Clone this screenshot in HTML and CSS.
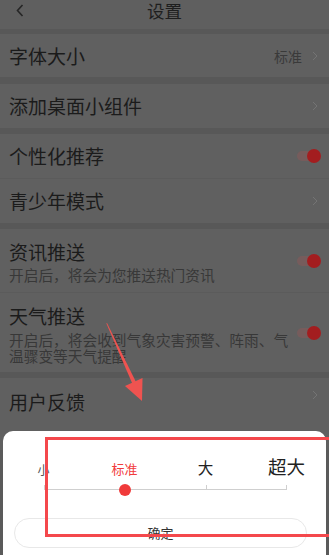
FILE: index.html
```html
<!DOCTYPE html>
<html lang="zh">
<head>
<meta charset="utf-8">
<title>设置</title>
<link rel="stylesheet" href="styles.css">
</head>
<body>
<div class="screen">
  <header class="topbar">
    <svg class="back" width="8" height="13" viewBox="0 0 8 13"><path d="M6.5 1 L1.5 6.5 L6.5 12" fill="none" stroke="#262626" stroke-width="1.6"/></svg>
    <h1 class="title">设置</h1>
    <span></span>
  </header>
  <div class="gap g1"></div>
  <div class="row r1">
    <span class="label">字体大小</span>
    <span class="value">标准</span>
    <svg class="chev" width="6" height="10" viewBox="0 0 6 10"><path d="M1 1 L5 5 L1 9" fill="none" stroke="#747474" stroke-width="1"/></svg>
  </div>
  <div class="gap g7"></div>
  <div class="row r2">
    <span class="label">添加桌面小组件</span>
    <svg class="chev" width="6" height="10" viewBox="0 0 6 10"><path d="M1 1 L5 5 L1 9" fill="none" stroke="#747474" stroke-width="1"/></svg>
  </div>
  <div class="gap g2"></div>
  <div class="row r3 divided">
    <span class="label">个性化推荐</span>
    <span class="toggle"><span class="knob"></span></span>
  </div>
  <div class="row r4">
    <span class="label">青少年模式</span>
    <svg class="chev" width="6" height="10" viewBox="0 0 6 10"><path d="M1 1 L5 5 L1 9" fill="none" stroke="#747474" stroke-width="1"/></svg>
  </div>
  <div class="gap g2"></div>
  <div class="row r5 divided">
    <div class="text">
      <div class="label">资讯推送</div>
      <div class="sub">开启后，将会为您推送热门资讯</div>
    </div>
    <span class="toggle"><span class="knob"></span></span>
  </div>
  <div class="row r6">
    <div class="text">
      <div class="label">天气推送</div>
      <div class="sub">开启后，将会收到气象灾害预警、阵雨、气温骤变等天气提醒</div>
    </div>
    <span class="toggle"><span class="knob"></span></span>
  </div>
  <div class="gap g2"></div>
  <div class="row r7">
    <span class="label">用户反馈</span>
    <svg class="chev" width="6" height="10" viewBox="0 0 6 10"><path d="M1 1 L5 5 L1 9" fill="none" stroke="#747474" stroke-width="1"/></svg>
  </div>
</div>

<div class="sheet">
  <div class="labels">
    <span class="opt s">小</span>
    <span class="opt m">标准</span>
    <span class="opt l">大</span>
    <span class="opt xl">超大</span>
  </div>
  <div class="scale">
    <span class="seg first"><span class="dot"></span></span>
    <span class="seg"></span>
    <span class="seg last"></span>
  </div>
  <div class="confirm">确定</div>
</div>

<div class="mark-box"></div>
<svg class="arrow" width="60" height="90" viewBox="0 0 60 90">
  <path d="M6 2 L5.4 2.4 L31.5 63 L35.2 61.6 Z" fill="#ef5350"/>
  <path d="M24 65 L41.5 57 L41 80 Z" fill="#ef5350"/>
</svg>
</body>
</html>
```

FILE: styles.css
```css
html, body {
  margin: 0;
  padding: 0;
}
body {
  width: 329px;
  height: 555px;
  overflow: hidden;
  position: relative;
  background: #5a5a5a;
  font-family: "Noto Sans CJK SC", "Noto Sans", sans-serif;
  color: #1b1b1b;
}
.screen {
  display: flex;
  flex-direction: column;
}
.topbar {
  height: 29px;
  background: #5f5f5f;
  display: grid;
  grid-template-columns: 1fr auto 1fr;
  align-items: start;
}
.back {
  margin: 4px 0 0 16px;
}
.title {
  margin: 0;
  font-size: 17.5px;
  font-weight: normal;
  line-height: 21px;
  color: #1e1e1e;
}
.gap {
  background: #585858;
}
.g1 { height: 5px; }
.g7 { height: 7px; }
.g2 { height: 6px; }
.row {
  background: #606060;
  display: flex;
  align-items: center;
  padding: 0 10px 0 9px;
}
.divided {
  border-bottom: 1px solid #5b5b5b;
}
.r1 { height: 43px; }
.r2 { height: 44px; }
.r3 { height: 44px; }
.r4 { height: 44px; }
.r5 { height: 63px; }
.r6 { height: 79px; }
.r7 { height: 60px; align-items: flex-start; padding-top: 12px; }
.label {
  font-size: 19px;
  line-height: 24px;
  flex: 1;
}
.value {
  font-size: 14px;
  color: #3a3a3a;
  margin-right: 10px;
}
.chev {
  margin-right: 1px;
}
.text {
  flex: 1;
  width: 285px;
  padding-top: 2px;
}
.text .label {
  flex: none;
}
.sub {
  width: 286px;
  font-size: 14.7px;
  line-height: 16px;
  color: #383838;
  margin-top: 3px;
}
.r6 .sub {
  margin-top: 4px;
}
.toggle {
  width: 22px;
  height: 10px;
  border-radius: 5px;
  background: #765c5c;
  display: flex;
  align-items: center;
  justify-content: flex-end;
  flex: none;
}
.knob {
  width: 14px;
  height: 14px;
  border-radius: 50%;
  background: #a31d1f;
  margin-right: -2px;
}

.sheet {
  position: absolute;
  left: 3px;
  right: 3px;
  top: 431px;
  bottom: 0;
  background: #ffffff;
  border-radius: 10px 10px 0 0;
  display: flex;
  flex-direction: column;
  padding-top: 22px;
}
.labels {
  display: grid;
  grid-template-columns: repeat(4, 81px);
  height: 24px;
  align-items: end;
}
.opt {
  text-align: center;
  line-height: 1.2;
}
.s { font-size: 12px; color: #555; }
.m { font-size: 13px; color: #f23c3c; }
.l { font-size: 15.5px; color: #222; }
.xl { font-size: 18.5px; color: #222; }
.scale {
  display: grid;
  grid-template-columns: repeat(3, 81px);
  margin-left: 41px;
  margin-top: 8px;
}
.seg {
  height: 4px;
  border-bottom: 1px solid #cfcfcf;
  border-left: 1px solid #cfcfcf;
  position: relative;
}
.seg.last {
  border-right: 1px solid #cfcfcf;
}
.dot {
  position: absolute;
  z-index: 2;
  right: -6px;
  top: -1.5px;
  width: 12px;
  height: 12px;
  border-radius: 50%;
  background: #f03a3a;
}
.confirm {
  margin: 28px 0 0 11px;
  width: 293px;
  height: 30px;
  box-sizing: border-box;
  border: 1px solid #e8e8e8;
  border-radius: 15px;
  text-align: center;
  font-size: 13px;
  line-height: 28px;
  color: #333;
}
.mark-box {
  position: absolute;
  left: 45px;
  top: 437px;
  width: 290px;
  height: 100px;
  box-sizing: border-box;
  border: 3px solid #f4484c;
}
.arrow {
  position: absolute;
  left: 101px;
  top: 321px;
}
```
